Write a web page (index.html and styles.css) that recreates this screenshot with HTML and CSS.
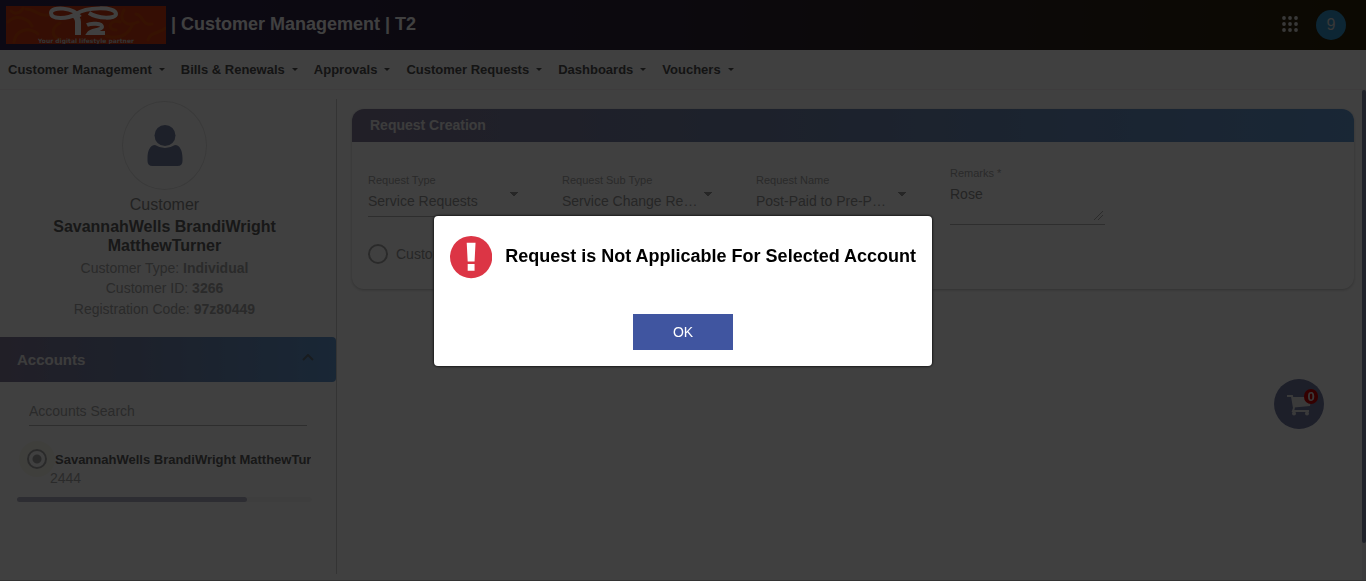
FILE: index.html
```html
<!DOCTYPE html>
<html lang="en">
<head>
<meta charset="utf-8">
<title>Customer Management</title>
<link rel="stylesheet" href="styles.css">
</head>
<body>
<div class="app">
  <header class="topbar">
    <svg class="logo" viewBox="0 0 160 38" role="img" aria-label="T2">
      <rect width="160" height="38" fill="#d43810"/>
      <g fill="none" stroke="#d84a08" stroke-width="3" stroke-linecap="round">
        <path d="M2 16c8-8 20-4 24 4M8 36c2-12 14-16 24-8M20 3c10 0 12 8 22 6M54 33c-10-2-8-12 0-16M118 4c-6 10 2 18 14 12M100 30c14 4 22-2 26-10M130 8c8 2 6 12 16 10M142 34c2-8 10-6 18-12M110 24c-10 0-6-12 4-8M5 5c4 4 10 2 12-3"/>
      </g>
      <g fill="none" stroke="#fff">
        <path stroke-width="6" d="M72 29V16c0-4-2-6-5-8"/>
        <path stroke-width="4" d="M74 11C68 1 45 0 45 7c0 7 17 6 25 1 10-7 40-8 40 0 0 5-18 5-27-1"/>
        <path stroke-width="4" d="M81 19c4-2 15-2 15 2 0 3-11 3-13 6h16"/>
      </g>
      <text class="logo-tag" x="80" y="37" text-anchor="middle">Your digital lifestyle partner</text>
    </svg>
    <h1 class="brand">| Customer Management | T2</h1>
    <button class="apps" type="button" aria-label="Apps">
      <svg width="16" height="16" viewBox="0 0 16 16" fill="currentColor"><circle cx="2" cy="2" r="1.900"/><circle cx="8" cy="2" r="1.900"/><circle cx="14" cy="2" r="1.900"/><circle cx="2" cy="8" r="1.900"/><circle cx="8" cy="8" r="1.900"/><circle cx="14" cy="8" r="1.900"/><circle cx="2" cy="14" r="1.900"/><circle cx="8" cy="14" r="1.900"/><circle cx="14" cy="14" r="1.900"/></svg>
    </button>
    <button class="profile" type="button">9</button>
  </header>
  <nav class="menu">
    <a class="menu-item" href="#">Customer Management</a>
    <a class="menu-item" href="#">Bills &amp; Renewals</a>
    <a class="menu-item" href="#">Approvals</a>
    <a class="menu-item" href="#">Customer Requests</a>
    <a class="menu-item" href="#">Dashboards</a>
    <a class="menu-item" href="#">Vouchers</a>
  </nav>
  <div class="content">
    <aside class="sidebar">
      <section class="customer">
        <div class="avatar">
          <svg width="36" height="42" viewBox="0 0 36 42" fill="currentColor"><circle cx="18" cy="10.500" r="10.500"/><path d="M8 20q10 6 20 0c5 0 7.500 6 7.500 13v3q0 5-5 5h-25q-5 0-5-5v-3c0-7 2.500-13 7.500-13z"/></svg>
        </div>
        <p class="role">Customer</p>
        <h2 class="name">SavannahWells BrandiWright MatthewTurner</h2>
        <p class="detail">Customer Type: <b>Individual</b></p>
        <p class="detail">Customer ID: <b>3266</b></p>
        <p class="detail">Registration Code: <b>97z80449</b></p>
      </section>
      <button class="accounts-head" type="button">Accounts
        <svg class="chevron" width="12" height="8" viewBox="0 0 12 8" fill="none" stroke="currentColor" stroke-width="2"><path d="M1 6l5-5 5 5"/></svg>
      </button>
      <div class="accounts">
        <input class="search" type="search" placeholder="Accounts Search" aria-label="Accounts Search">
        <div class="account">
          <input class="radio selected" type="radio" id="acc" name="account" checked>
          <label class="account-name" for="acc">SavannahWells BrandiWright MatthewTur</label>
        </div>
        <p class="account-id">2444</p>
        <div class="track"><div class="thumb"></div></div>
      </div>
    </aside>
    <main class="main">
      <section class="card">
        <h2 class="card-head">Request Creation</h2>
        <form class="card-body">
          <div class="fields">
            <div class="field">
              <label class="label" for="type">Request Type</label>
              <select class="select" id="type"><option>Service Requests</option></select>
            </div>
            <div class="field">
              <label class="label" for="sub">Request Sub Type</label>
              <select class="select" id="sub"><option>Service Change Re…</option></select>
            </div>
            <div class="field">
              <label class="label" for="rname">Request Name</label>
              <select class="select" id="rname"><option>Post-Paid to Pre-P…</option></select>
            </div>
            <div class="field field-tall">
              <label class="label" for="remarks">Remarks *</label>
              <textarea class="remarks" id="remarks">Rose</textarea>
            </div>
          </div>
          <label class="choice"><input class="radio" type="radio" name="level">Customer</label>
        </form>
      </section>
    </main>
    <div class="page-track"><div class="page-thumb"></div></div>
  </div>
</div>
<button class="cart" type="button" aria-label="Cart">
  <svg width="24" height="22" viewBox="0 0 24 22"><path d="M0 2h5l2 12" fill="none" stroke="currentColor" stroke-width="2"/><path d="M5 3h19l-1 9-16 1.500z" fill="currentColor"/><path d="M7 14l-1 3h16" fill="none" stroke="currentColor" stroke-width="2"/><circle cx="7" cy="19.500" r="2" fill="currentColor"/><circle cx="20" cy="19.500" r="2" fill="currentColor"/></svg>
  <span class="badge">0</span>
</button>
<div class="overlay">
  <div class="dialog" role="alertdialog" aria-modal="true" aria-labelledby="msg">
    <div class="message">
      <svg width="43" height="44" viewBox="0 0 43 44"><circle cx="21.500" cy="22" r="21.500" fill="#dc3545"/><path fill="#fff" d="M17 7.500h9l-1 19h-7zM18 29h7v7h-7z"/></svg>
      <h2 class="message-text" id="msg">Request is Not Applicable For Selected Account</h2>
    </div>
    <button class="ok" type="button">OK</button>
  </div>
</div>
</body>
</html>
```
FILE: styles.css
```css
* { box-sizing: border-box; }
body, h1, h2, p { margin: 0; }
body { font-family: "Liberation Sans", Arial, sans-serif; font-size: 14px; color: #606060; background: #fff; }
button, input, select, textarea { font: inherit; color: inherit; border: 0; border-radius: 0; padding: 0; margin: 0; background: none; outline: none; }

.app { min-height: 100vh; display: flex; flex-direction: column; border-bottom: 1px solid #ccc; }

.topbar { height: 50px; display: flex; align-items: center; padding: 0 20px 0 6px; background: linear-gradient(90deg, #302450, #302438 50%, #302408); color: #fff; }
.logo { width: 160px; height: 38px; }
.logo-tag { font: bold 6px "DejaVu Sans", sans-serif; fill: #ccc; }
.brand { flex: 1; margin-left: 5px; font-size: 18px; line-height: 24px; padding-bottom: 2px; }
.apps { display: flex; margin-right: 18px; padding-bottom: 2px; color: #e0e0e0; }
.profile { width: 30px; height: 30px; border-radius: 50%; background: #3498d0; color: #ddd; font-size: 16px; }

.menu { height: 40px; display: flex; align-items: center; gap: 16px; padding: 0 8px; border-bottom: 1px solid #f8f0f2; }
.menu-item { display: flex; align-items: center; gap: 7px; font-size: 13px; font-weight: bold; color: #505050; text-decoration: none; }
.menu-item::after { content: ""; border: 3px solid transparent; border-top-color: currentColor; border-bottom: 0; }

.content { flex: 1; display: flex; }
.sidebar { flex: 0 0 337px; margin: 9px 0 6px; border-right: 1px solid #d0d0d0; }
.customer { padding: 2px 45px 17px 38px; text-align: center; }
.avatar { width: 85px; height: 89px; margin: 0 auto 5px; border: 1px solid #e4e4e4; border-radius: 50%; display: flex; align-items: center; justify-content: center; color: #7480a4; }
.role { font-size: 16px; line-height: 20px; color: #888; }
.name { font-size: 16px; line-height: 19px; margin: 2px 0 3px; }
.detail { line-height: 20px; color: #a8a8a8; }
.detail + .detail { padding-bottom: 1px; }

.accounts-head { width: 100%; height: 45px; display: flex; align-items: center; justify-content: space-between; padding: 0 22px 0 17px; border-radius: 0 4px 4px 0; background: linear-gradient(90deg, #847c9c, #7484ac 40%, #649ad4); color: #f0f0f0; font-size: 15px; font-weight: bold; }
.chevron { margin-bottom: 4px; color: #60707c; }
.accounts { padding: 15px 24px 0 17px; }
.search { display: block; width: 278px; height: 29px; margin-left: 12px; border-bottom: 1px solid #b8b8b8; }
.search::placeholder { color: #a8a8a8; }
.account { display: flex; align-items: center; gap: 8px; margin: 23px 0 0 10px; height: 20px; }
.account-name { font-size: 13px; font-weight: bold; white-space: nowrap; overflow: hidden; }
.account-id { margin-left: 33px; line-height: 18px; color: #a8a8a8; }
.radio { appearance: none; flex: none; width: 20px; height: 20px; border: 2px solid #a8a8a8; border-radius: 50%; }
.selected { background: radial-gradient(circle, #a8a8a8 4px, transparent 5px); box-shadow: 0 0 0 8px #fbf9f0; }
.track { margin-top: 10px; height: 5px; background: #f8f8f8; border-radius: 3px; }
.thumb { width: 78%; height: 100%; background: #b4b4c8; border-radius: 3px; }

.main { flex: 1; padding: 19px 8px 0 15px; }
.card { border-radius: 12px; box-shadow: 0 1px 3px #c0c0c0; overflow: hidden; }
.card-head { height: 33px; padding-left: 18px; line-height: 33px; font-size: 14px; color: #f0f0f0; background: linear-gradient(90deg, #847c9c, #7484ac 40%, #649ad4); }
.card-body { padding: 24px 16px 22px; }
.fields { display: flex; gap: 39px; }
.field { width: 155px; padding-top: 7px; }
.field-tall { padding-top: 0; }
.label { display: block; font-size: 11px; line-height: 14px; color: #a8a8a8; }
.select { appearance: none; display: block; width: 100%; height: 30px; padding: 0 20px 1px 0; color: #989898; border-bottom: 1px solid #b8b8b8; background: linear-gradient(to top right, transparent 50%, #989898 51%) right 9px top 5px / 5px 5px no-repeat, linear-gradient(to top left, transparent 50%, #989898 51%) right 4px top 5px / 5px 5px no-repeat; }
.remarks { display: block; width: 100%; height: 45px; padding-top: 6px; color: #909090; resize: vertical; border-bottom: 1px solid #b8b8b8; }
.remarks::-webkit-resizer { background: linear-gradient(135deg, transparent 47%, #b0b0b0 47%, #b0b0b0 53%, transparent 53%, transparent 68%, #b0b0b0 68%, #b0b0b0 74%, transparent 74%) 4px 2px / 9px 9px no-repeat; }
.choice { display: inline-flex; align-items: center; gap: 8px; margin-top: 19px; color: #989898; }

.page-track { width: 4px; background: #f0f0f4; }
.page-thumb { height: 453px; background: #8088a8; border-radius: 2px; }

.cart { position: fixed; right: 42px; top: 379px; width: 50px; height: 50px; border-radius: 50%; background: #747ca4; color: #e8e8e8; display: flex; align-items: center; justify-content: center; padding-top: 1px; }
.badge { position: absolute; top: 10px; left: 30px; width: 14px; height: 15px; border-radius: 8px; background: #d00000; font-size: 13px; font-weight: bold; line-height: 15px; text-align: center; }

.overlay { position: fixed; inset: 0; display: flex; align-items: center; justify-content: center; background: rgba(0, 0, 0, 0.75); }
.dialog { width: 498px; padding: 19px 16px 16px; border-radius: 4px; background: #fff; box-shadow: 0 0 2px 1px #1c1c1c; display: flex; flex-direction: column; align-items: center; gap: 35px; }
.message { width: 100%; display: flex; align-items: center; gap: 13px; }
.message-text { font-size: 18px; line-height: 24px; padding-bottom: 2px; color: #000; white-space: nowrap; }
.ok { width: 100px; height: 36px; background: #4055a0; color: #fff; }
```
